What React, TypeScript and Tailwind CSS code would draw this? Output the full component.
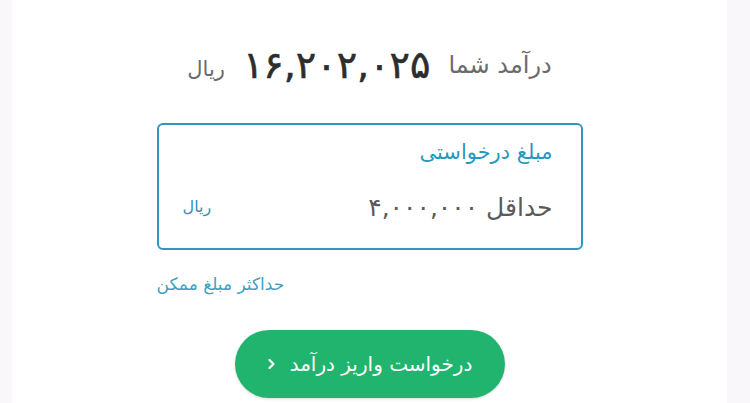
export default function App() {
  return (
    <div
      dir="rtl"
      className="w-[750px] h-[403px] overflow-hidden bg-[#faf7fa] flex pl-[12px] pr-[23px]"
      style={{ fontFamily: '"DejaVu Sans", "Noto Sans", sans-serif' }}
    >
      <div className="flex-1 bg-white flex flex-col items-center pt-[42px]">
        {/* درآمد */}
        <div className="flex items-center gap-[18px] h-[46px]">
          <span className="text-[24px] text-[#6b6b6b]">درآمد شما</span>
          <span className="text-[38px] text-[#2d2d2d] tracking-wide [-webkit-text-stroke:0.6px_#2d2d2d]">۱۶,۲۰۲,۰۲۵</span>
          <span className="text-[21px] text-[#6b6b6b] mt-[10px]">ریال</span>
        </div>

        {/* فیلد مبلغ */}
        <div className="mt-[35px] w-[426px] h-[127px] border-[2.5px] border-[#2f97bb] rounded-[6px] pr-[28px] pl-[24px] pt-[12px] flex flex-col">
          <span className="text-[21px] text-[#2a97bd]">مبلغ درخواستی</span>
          <div className="flex items-center justify-between mt-[20px]">
            <span className="text-[25px] text-[#5a5a5a]">حداقل ۴,۰۰۰,۰۰۰</span>
            <span className="text-[16px] text-[#3a8fae]">ریال</span>
          </div>
        </div>

        <div className="w-[426px] mt-[22px] flex justify-end">
          <span className="text-[17px] text-[#3f9fc0]">حداکثر مبلغ ممکن</span>
        </div>

        {/* دکمه */}
        <button className="mt-[32px] w-[270px] h-[68px] shrink-0 rounded-full bg-[#21b46e] text-white text-[20px] flex items-center justify-center gap-[14px] shadow-[0_1px_3px_rgba(0,0,0,0.15)]">
          <span>درخواست واریز درآمد</span>
          <svg width="9" height="12" viewBox="0 0 9 12" fill="none" stroke="white" strokeWidth="2.2" strokeLinecap="round" strokeLinejoin="round">
            <path d="M2.5 2 L6.5 6 L2.5 10" />
          </svg>
        </button>
      </div>
    </div>
  );
}
